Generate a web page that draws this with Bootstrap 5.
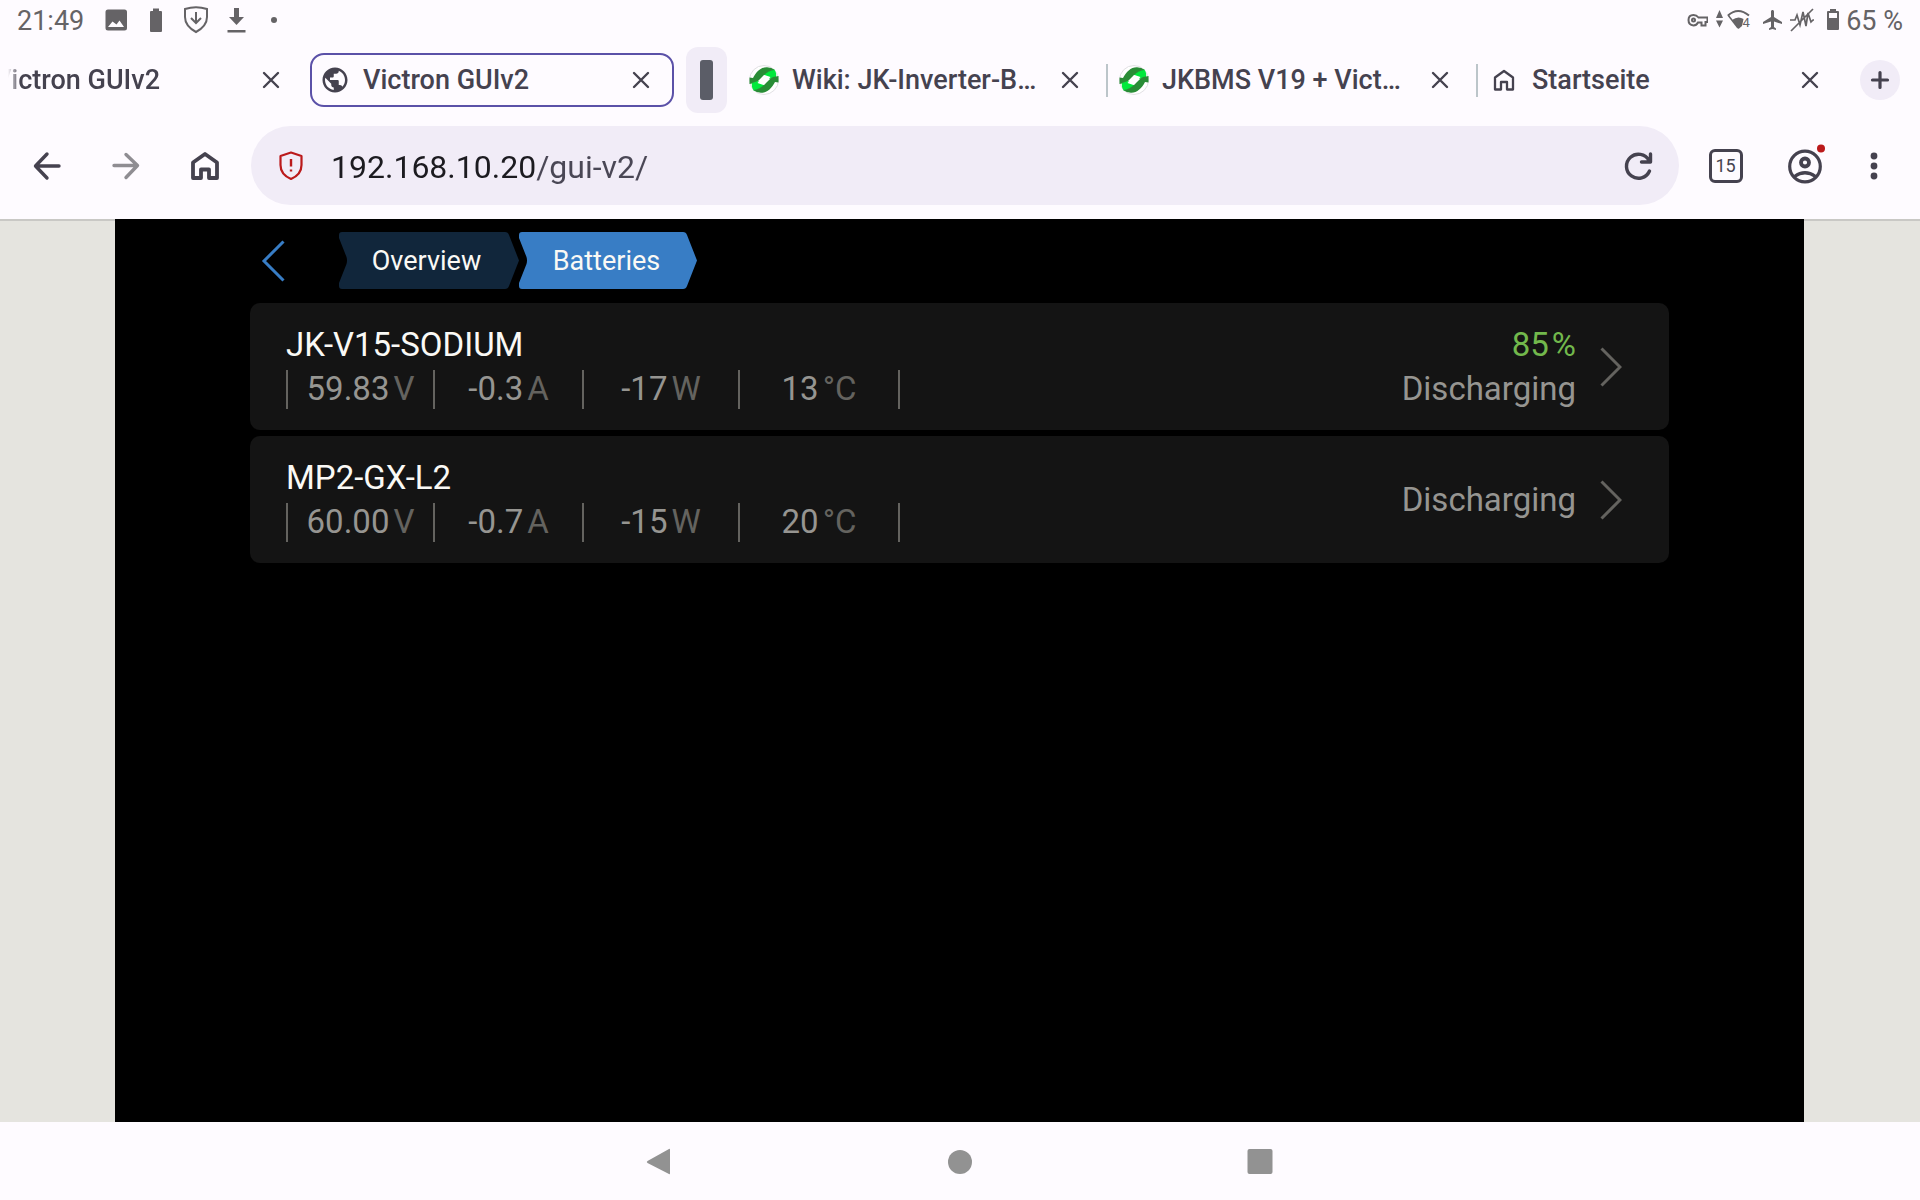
<!DOCTYPE html>
<html lang="de">
<head>
<meta charset="utf-8">
<meta name="viewport" content="width=device-width, initial-scale=1">
<title>Victron GUIv2</title>
<link href="https://cdn.jsdelivr.net/npm/bootstrap@5.3.0/dist/css/bootstrap.min.css" rel="stylesheet">
<style>
  :root { --ink: #45424f; --status: #656366; --pale: #f1ecf7; --surface: #fefbff; }
  body { font-family: Roboto, "Noto Sans", sans-serif; background: var(--surface); color: var(--ink); }
  svg { display: block; flex: none; }
  button { color: inherit; }
  .bare { border: 0; background: none; padding: 0; display: flex; align-items: center; justify-content: center; }

  /* system status bar */
  .status-bar { height: 40px; padding: 0 17px; font-size: 27px; line-height: 40px; color: var(--status); }
  .status-bar span { padding-top: 1px; }
  .clock { width: 79px; }
  .status-icons { gap: 6px; }

  /* tab strip */
  .tab-strip { height: 80px; font-size: 27px; font-weight: 500; line-height: 54px; }
  .tab { flex: 1 1 370px; min-width: 0; height: 54px; padding: 0 17px 0 13px; }
  .tab-first { flex-basis: 310px; padding-left: 8px; padding-right: 20px; }
  .tab-active { flex-basis: 364px; line-height: 50px; padding-left: 8px; padding-right: 12px; border: 2px solid #5b51a8; border-radius: 14px; }
  .tab-label { color: inherit; text-decoration: none; white-space: nowrap; margin-left: 13px; }
  .tab-cut { width: 152px; margin-left: 0; overflow: hidden; -webkit-mask-image: linear-gradient(90deg, transparent, #000 12px); mask-image: linear-gradient(90deg, transparent, #000 12px); }
  .tab-close { width: 38px; height: 38px; }
  .tab-rule { width: 2px; height: 33px; background: #bcc5ca; margin-right: 11px; }
  .tab-chip { width: 41px; height: 66px; border-radius: 12px; background: var(--pale); margin: 0 9px 0 12px; }
  .tab-chip span { width: 13px; height: 40px; border-radius: 3px; background: #5b5d67; }
  .tab-new { width: 40px; height: 40px; border-radius: 50%; background: var(--pale); margin: 0 20px 0 14px; }

  /* address row */
  .tool-row { padding: 6px 17px 14px 7px; }
  .tool { width: 79px; height: 79px; }
  .tool-menu { width: 59px; }
  .address { height: 79px; border-radius: 40px; background: var(--pale); margin: 0 7px; padding: 0 20px; }
  .address-input { border: 0; outline: 0; min-width: 0; padding: 2px 0 0; margin-left: 20px; font-size: 32px; line-height: 40px;
    color: transparent; background: linear-gradient(90deg, #1c1b20 205px, #4a4755 205px); -webkit-background-clip: text; background-clip: text; }
  .count { font-size: 18px; line-height: 28px; width: 34px; height: 34px; border: 3px solid var(--ink); border-radius: 6px; }

  /* page area */
  .page-area { background: #e5e4df; padding: 0 116px 0 115px; box-shadow: inset 0 2px 0 #c9c8c5; }
  .gui { background: #000; padding: 13px 135px; color: #faf9f5; }
  .crumbs { height: 57px; font-size: 27px; line-height: 59px; margin-bottom: 14px; }
  .crumb-back { width: 46px; height: 57px; margin-right: 43px; }
  .crumb { height: 57px; width: 180px; position: relative; color: #faf9f5; text-decoration: none; text-align: center; padding-right: 5px; }
  .crumb svg { position: absolute; inset: 0; }
  .crumb span { position: relative; }
  .bat-list { gap: 6px; }
  .bat { background: #141414; border-radius: 10px; padding: 20px 47px 19px 36px; font-size: 33px; line-height: 44px; color: #faf9f5; text-decoration: none; }
  .soft { color: #969591; }
  .unit { color: #64635f; margin-left: 4px; }
  .charge { color: #72b84c; }
  .charge span { margin-left: 3px; }
  .cells { display: grid; grid-template-columns: 147px 149px 156px 160px 2px; align-items: center; height: 44px; }
  .cells > span { height: 39px; line-height: 37px; border-left: 2px solid #64635f; text-align: center; }

  .nav-keys { height: 78px; }
  .nav-keys .bare { width: 300px; }
</style>
</head>
<body>
<svg width="0" height="0" class="position-absolute" aria-hidden="true">
  <symbol id="x" viewBox="0 0 20 20"><path d="M3 3 17 17M17 3 3 17" stroke="currentColor" stroke-width="2.4" stroke-linecap="round"/></symbol>
  <symbol id="home" viewBox="0 0 32 32"><path d="M4 12.500 16 4 28 12.500V28H20V19.500H12V28H4Z" fill="none" stroke="currentColor" stroke-width="3.800" stroke-linejoin="round"/></symbol>
  <symbol id="home-small" viewBox="0 0 24 24"><path d="M3 9.500 12 3 21 9.500V21.500H15V14H9V21.500H3Z" fill="none" stroke="currentColor" stroke-width="2.300" stroke-linejoin="round"/></symbol>
  <symbol id="fav" viewBox="0 0 30 30">
    <circle cx="15" cy="15" r="14.500" fill="#fff" stroke="#e2e0e4"/>
    <path d="M15 8 25 4Q28 8 27 12L21 14 15 10Z" fill="#00e93c"/><path d="M.5 19V12.500L4 13C7 7 12 2 18 2.200Q23 2.500 25.500 5 20 5.500 15 10L8.500 16.500 6 18Z" fill="#298c36"/>
    <g transform="rotate(180 15 15)"><path d="M15 8 25 4Q28 8 27 12L21 14 15 10Z" fill="#00e93c"/><path d="M.5 19V12.500L4 13C7 7 12 2 18 2.200Q23 2.500 25.500 5 20 5.500 15 10L8.500 16.500 6 18Z" fill="#298c36"/></g>
    <path d="M8.500 18 15.500 10 21.500 12 14.500 20Z" fill="#fff"/>
  </symbol>
</svg>

<div class="d-flex flex-column min-vh-100">
  <div class="status-bar d-flex align-items-center justify-content-between">
    <div class="d-flex align-items-center">
      <span class="clock">21:49</span>
      <svg width="40" height="40" fill="currentColor"><path fill-rule="evenodd" d="M12 9.500H28.500Q31 9.500 31 12V28Q31 30.500 28.500 30.500H12Q9.500 30.500 9.500 28V12Q9.500 9.500 12 9.500ZM12 27H28L23.500 20.500 20.500 24.500 16.500 21.500Z"/></svg>
      <svg width="40" height="40" fill="currentColor"><path d="M17 11V8.500H23V11H25Q26 11 26 12V31Q26 32 25 32H15Q14 32 14 31V12Q14 11 15 11Z"/></svg>
      <svg width="40" height="40" fill="none" stroke="currentColor" stroke-width="2"><path d="M9 9Q20 5.500 31 9V17Q31 26 20 32 9 26 9 17Z"/><path d="M20 12V23M15 18 20 23 25 18"/></svg>
      <svg width="40" height="40" fill="currentColor"><path d="M18 8H23V17H28L20.500 25 13 17H18ZM11.500 30H29.500V32.500H11.500Z"/></svg>
      <svg width="36" height="40" fill="currentColor"><circle cx="18" cy="20" r="3"/></svg>
    </div>
    <div class="status-icons d-flex align-items-center">
      <svg width="24" height="40" fill="none" stroke="currentColor" stroke-width="2"><path d="M14.500 17.500H23.500V22H21.500V25.500H17.500V22.500H14Q12.500 25.500 9.500 25.500 4.500 25 4.500 20 4.500 15 9.500 15 12.500 15 14.500 17.500Z"/><circle cx="9.500" cy="20" r="1.500"/></svg>
      <svg width="40" height="40" fill="currentColor"><path d="M2 18 5.500 10 9 18ZM2 20.500H9L5.500 27.500Z"/><path d="M14 15.500Q24 6.500 35 15.500" fill="none" stroke="currentColor" stroke-width="2"/><path d="M14 15 24 28" stroke="currentColor" stroke-width="1.500"/><path d="M18 20Q24 15.500 29.500 19L28 26 24.500 29Z"/><text x="28.500" y="27" font-size="13">4</text></svg>
      <svg width="24" height="24" viewBox="-1 0 24 24" fill="currentColor"><path d="M21 16v-2l-8-5V3.500c0-.83-.67-1.500-1.500-1.500S10 2.670 10 3.500V9l-8 5v2l8-2.500V19l-2 1.500V22l3.500-1 3.500 1v-1.500L13 19v-5.500l8 2.500z"/></svg>
      <svg width="30" height="40" fill="none" stroke="currentColor" stroke-width="1.700"><path d="M0 20H5L7 15 10 25 13 12 16 26 18 13 21 22 23 20H24M1 31 23 9"/></svg>
      <svg width="14" height="40" fill="currentColor"><path fill-rule="evenodd" d="M4 11V9H10V11H12Q13 11 13 12V29Q13 30 12 30H2Q1 30 1 29V12Q1 11 2 11ZM3 13V18H11V13Z"/></svg>
      <span>65 %</span>
    </div>
  </div>

  <div class="tab-strip d-flex align-items-center">
    <div class="tab tab-first d-flex align-items-center justify-content-between">
      <a href="#" class="tab-label tab-cut d-flex justify-content-end"><span>Victron GUIv2</span></a>
      <button class="bare tab-close" aria-label="Tab schließen"><svg width="20" height="20"><use href="#x"/></svg></button>
    </div>
    <div class="tab tab-active d-flex align-items-center">
      <svg width="30" height="30" viewBox="0 0 24 24" fill="currentColor"><path d="M12 2C6.480 2 2 6.480 2 12s4.480 10 10 10 10-4.480 10-10S17.520 2 12 2zm-1 17.930c-3.950-.49-7-3.850-7-7.930 0-.62.08-1.210.21-1.790L9 15v1c0 1.100.9 2 2 2v1.930zm6.900-2.540c-.26-.81-1-1.390-1.900-1.390h-1v-3c0-.55-.45-1-1-1H8v-2h2c.55 0 1-.45 1-1V7h2c1.100 0 2-.9 2-2v-.41c2.930 1.190 5 4.060 5 7.410 0 2.080-.8 3.970-2.100 5.390z"/></svg>
      <a href="#" class="tab-label flex-grow-1">Victron GUIv2</a>
      <button class="bare tab-close" aria-label="Tab schließen"><svg width="20" height="20"><use href="#x"/></svg></button>
    </div>
    <button class="bare tab-chip" aria-label="Tabgruppe"><span></span></button>
    <div class="tab d-flex align-items-center">
      <svg width="30" height="30"><use href="#fav"/></svg>
      <a href="#" class="tab-label flex-grow-1">Wiki: JK-Inverter-B…</a>
      <button class="bare tab-close" aria-label="Tab schließen"><svg width="20" height="20"><use href="#x"/></svg></button>
    </div>
    <div class="tab d-flex align-items-center ps-0">
      <div class="tab-rule"></div>
      <svg width="30" height="30"><use href="#fav"/></svg>
      <a href="#" class="tab-label flex-grow-1">JKBMS V19 + Vict…</a>
      <button class="bare tab-close" aria-label="Tab schließen"><svg width="20" height="20"><use href="#x"/></svg></button>
    </div>
    <div class="tab d-flex align-items-center ps-0">
      <div class="tab-rule"></div>
      <svg width="30" height="24"><use href="#home-small"/></svg>
      <a href="#" class="tab-label flex-grow-1">Startseite</a>
      <button class="bare tab-close" aria-label="Tab schließen"><svg width="20" height="20"><use href="#x"/></svg></button>
    </div>
    <button class="bare tab-new" aria-label="Neuer Tab"><svg width="20" height="20"><path d="M10 2.500V17.500M2.500 10H17.500" stroke="currentColor" stroke-width="3.200" stroke-linecap="round"/></svg></button>
  </div>

  <div class="tool-row d-flex align-items-center">
    <button class="bare tool" aria-label="Zurück"><svg width="32" height="32" fill="none" stroke="currentColor" stroke-width="3.400"><path d="M28 16H5M16 4 4.500 16 16 28" stroke-linecap="round" stroke-linejoin="round"/></svg></button>
    <button class="bare tool" aria-label="Vorwärts"><svg width="32" height="32" fill="none" stroke="#8f8d92" stroke-width="3.400"><path d="M4 15.500H27M16 4.500 27.500 15.500 16 27.500" stroke-linecap="round" stroke-linejoin="round"/></svg></button>
    <button class="bare tool" aria-label="Startseite"><svg width="32" height="32"><use href="#home"/></svg></button>
    <div class="address d-flex align-items-center flex-grow-1">
      <button class="bare" aria-label="Verbindung nicht sicher"><svg width="40" height="40" fill="none" stroke="#bb1a1b" stroke-width="2.200"><path d="M20 6.500 30.500 10V19Q30.500 28.500 20 33 9.500 28.500 9.500 19V10Z" stroke-linejoin="round"/><path d="M20 13V20.500M20 23.500V25.500" stroke-width="2.400"/></svg></button>
      <input class="address-input flex-grow-1" type="text" aria-label="Adresse" value="192.168.10.20/gui-v2/">
      <button class="bare" aria-label="Neu laden"><svg width="40" height="32" viewBox="-4 0 40 32" fill="none" stroke="currentColor" stroke-width="3.400" stroke-linecap="round" stroke-linejoin="round"><path d="M26.500 21A12 12 0 1 1 26 10.500M27.500 4V12H18.500"/></svg></button>
    </div>
    <button class="bare tool" aria-label="Tabs wechseln"><span class="count">15</span></button>
    <button class="bare tool" aria-label="Profil"><svg width="44" height="44" fill="none" stroke="currentColor" stroke-width="3.200"><circle cx="22" cy="22.500" r="15.300"/><circle cx="22" cy="18.500" r="4" stroke-width="3.800"/><path d="M11.500 32.500Q22 25 32.500 32.500"/><circle cx="38" cy="4.500" r="4" fill="#bb1a1b" stroke="none"/></svg></button>
    <button class="bare tool tool-menu" aria-label="Menü"><svg width="8" height="28" fill="currentColor"><circle cx="4" cy="4" r="3.400"/><circle cx="4" cy="14" r="3.400"/><circle cx="4" cy="24" r="3.400"/></svg></button>
  </div>

  <main class="page-area flex-grow-1 d-flex">
    <div class="gui flex-grow-1">
      <nav class="crumbs d-flex">
        <button class="bare crumb-back" aria-label="Back"><svg width="24" height="42" fill="none" stroke="#387dc5" stroke-width="3"><path d="M22.500 1.500 3 21 22.500 40.500"/></svg></button>
        <a href="#" class="crumb"><svg width="180" height="57" fill="#11263b"><path d="M3 0H166Q169 0 170 3L180 28.500 170 54Q169 57 166 57H3Q0 57 0 54V51L7.500 32Q8.500 28.500 7.500 25L0 6V3Q0 0 3 0Z"/></svg><span>Overview</span></a>
        <a href="#" class="crumb" aria-current="page"><svg width="180" height="57" fill="#387dc5"><path d="M3 0H164Q167 0 168 3L178 28.500 168 54Q167 57 164 57H3Q0 57 0 54V51L7.500 32Q8.500 28.500 7.500 25L0 6V3Q0 0 3 0Z"/></svg><span>Batteries</span></a>
      </nav>
      <div class="bat-list d-flex flex-column">
        <a href="#" class="bat d-flex align-items-center">
          <div class="flex-grow-1">
            <div>JK-V15-SODIUM</div>
            <div class="cells soft"><span>59.83<span class="unit">V</span></span><span>-0.3<span class="unit">A</span></span><span>-17<span class="unit">W</span></span><span>13<span class="unit">°C</span></span><span></span></div>
          </div>
          <div class="text-end me-4"><div class="charge">85<span>%</span></div><div class="soft">Discharging</div></div>
          <svg width="22" height="40" fill="none" stroke="#64635f" stroke-width="3"><path d="M1.500 1.500 20 20 1.500 38.500"/></svg>
        </a>
        <a href="#" class="bat d-flex align-items-center">
          <div class="flex-grow-1">
            <div>MP2-GX-L2</div>
            <div class="cells soft"><span>60.00<span class="unit">V</span></span><span>-0.7<span class="unit">A</span></span><span>-15<span class="unit">W</span></span><span>20<span class="unit">°C</span></span><span></span></div>
          </div>
          <div class="text-end me-4 soft">Discharging</div>
          <svg width="22" height="40" fill="none" stroke="#64635f" stroke-width="3"><path d="M1.500 1.500 20 20 1.500 38.500"/></svg>
        </a>
      </div>
    </div>
  </main>

  <div class="nav-keys d-flex justify-content-center">
    <button class="bare" aria-label="Zurück"><svg width="28" height="28" fill="#929292"><path d="M23 2Q24 1 24 3V26Q24 28 23 27L1.500 16Q0 15 1.500 14Z"/></svg></button>
    <button class="bare" aria-label="Startbildschirm"><svg width="28" height="28" fill="#929292"><circle cx="14" cy="15" r="12"/></svg></button>
    <button class="bare" aria-label="Übersicht"><svg width="28" height="28" fill="#929292"><rect x="1.500" y="2" width="25" height="25" rx="2"/></svg></button>
  </div>
</div>
<script src="https://cdn.jsdelivr.net/npm/bootstrap@5.3.0/dist/js/bootstrap.bundle.min.js"></script>
</body>
</html>
